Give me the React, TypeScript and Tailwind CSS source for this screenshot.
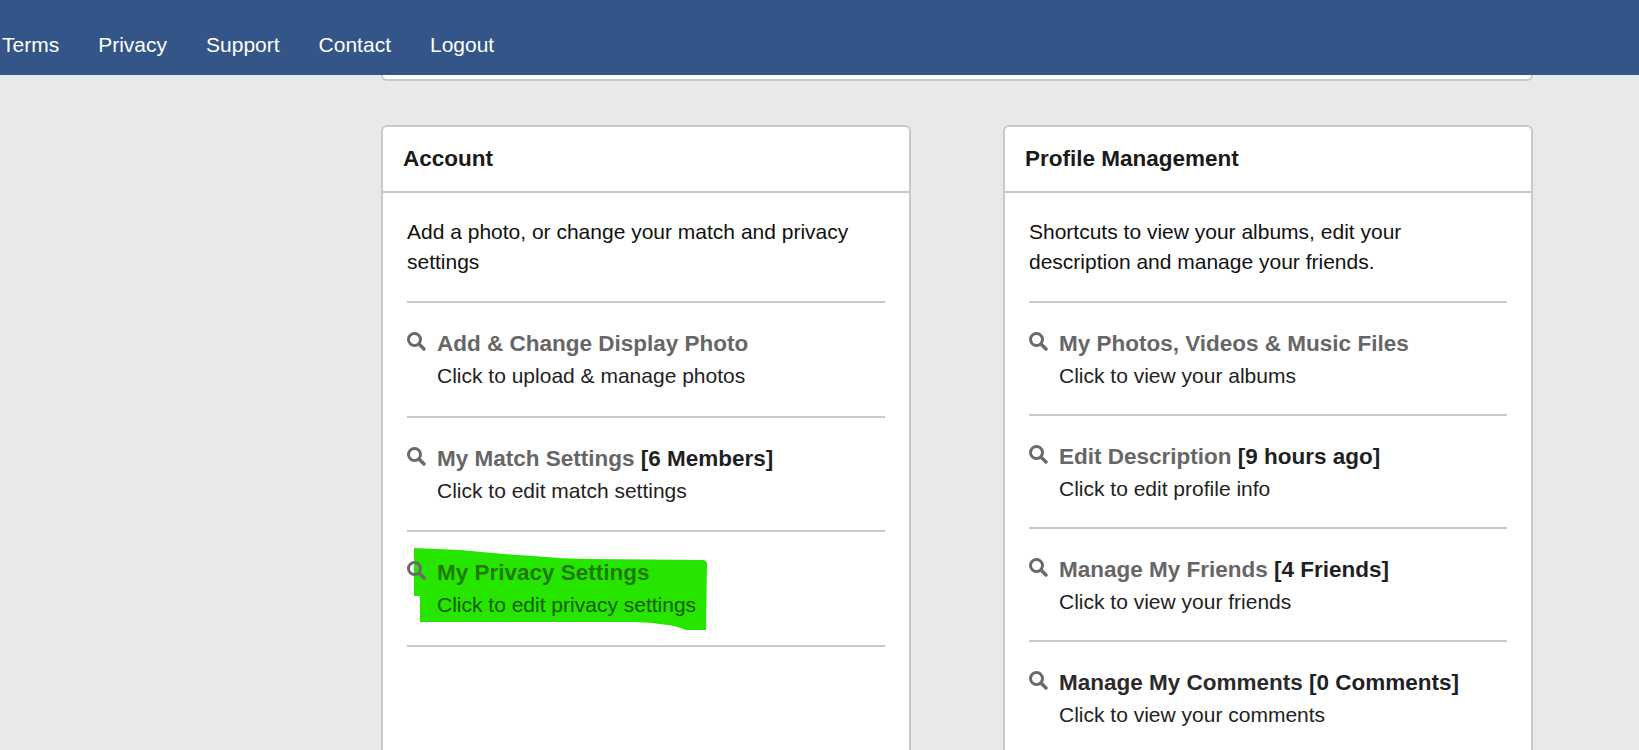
interface Item {
  title: string;
  note?: string;
  sub: string;
  dark?: boolean;
}

const accountItems: Item[] = [
  { title: 'Add & Change Display Photo', sub: 'Click to upload & manage photos' },
  { title: 'My Match Settings', note: '[6 Members]', sub: 'Click to edit match settings' },
  { title: 'My Privacy Settings', sub: 'Click to edit privacy settings' },
];

const profileItems: Item[] = [
  { title: 'My Photos, Videos & Music Files', sub: 'Click to view your albums' },
  { title: 'Edit Description', note: '[9 hours ago]', sub: 'Click to edit profile info' },
  { title: 'Manage My Friends', note: '[4 Friends]', sub: 'Click to view your friends' },
  { title: 'Manage My Comments', note: '[0 Comments]', sub: 'Click to view your comments', dark: true },
];

function SearchIcon() {
  return (
    <svg className="mt-[3px] shrink-0 relative z-10" width="19" height="19" viewBox="0 0 19 19" fill="none" stroke="#6a6a6a">
      <circle cx="7.5" cy="7.5" r="6" strokeWidth="3" />
      <path d="M12.2 12.2 L17 17" strokeWidth="3.4" strokeLinecap="round" />
    </svg>
  );
}

function Highlight() {
  return (
    <svg
      className="absolute left-[7px] top-[16px] pointer-events-none"
      width="300"
      height="88"
      viewBox="0 0 300 88"
    >
      <path
        d="M0 0 L47 2 Q85 6 120 8 Q150 11 177 11 L288 12 Q293 12 293 16 L292 82 L272 82 Q262 78 254 77 Q235 74 217 74 L6 74 L6 48 L0 48 Z"
        fill="#26e600"
      />
    </svg>
  );
}

function Row({ item, compact, marked }: { item: Item; compact: boolean; marked?: boolean }) {
  return (
    <div className={`relative flex border-b-2 border-[#c9c9c9] pt-[26px] ${compact ? 'pb-[23px]' : 'pb-[24.7px]'}`}>
      <SearchIcon />
      <div className="relative z-10 ml-[11px]">
        <div className={`text-[22.5px] leading-[30px] font-bold ${marked ? 'text-[#1f7a0a]' : 'text-[#666666]'}`}>
          <span className={item.dark ? 'text-[#2b2b2b]' : ''}>{item.title}</span>
          {item.note && <span className="text-[#1f1f24]"> {item.note}</span>}
        </div>
        <div className={`mt-[2px] text-[21px] leading-[30px] ${marked ? 'text-[#14590a]' : 'text-[#222222]'}`}>
          {item.sub}
        </div>
      </div>
      {marked && <Highlight />}
    </div>
  );
}

function Card({ title, intro, items, compact }: { title: string; intro: string; items: Item[]; compact: boolean }) {
  return (
    <section className="w-[530px] h-[700px] bg-white border-2 border-[#c9c9c9] rounded-[6px]">
      <h2 className="h-[66px] pl-[20px] flex items-center border-b-2 border-[#c9c9c9] text-[22.5px] font-bold text-[#1a1a1a]">
        {title}
      </h2>
      <div className="px-[24px] pt-[24px]">
        <p className="pb-[24px] border-b-2 border-[#c9c9c9] text-[21px] leading-[30px] text-[#111111]">{intro}</p>
        {items.map((item, i) => (
          <Row key={item.title} item={item} compact={compact} marked={item.title === 'My Privacy Settings' && i === 2} />
        ))}
      </div>
    </section>
  );
}

export default function App() {
  return (
    <div className="h-[750px] overflow-hidden bg-[#e9e9eb] font-['Liberation_Sans',Arial,sans-serif]">
      <header className="h-[75px] bg-[#335587] pl-[2px] pt-[30px] flex gap-[39px] text-[21px] leading-[30px] text-white">
        <a>Terms</a>
        <a>Privacy</a>
        <a>Support</a>
        <a>Contact</a>
        <a>Logout</a>
      </header>
      <div className="pl-[381px]">
        <div className="w-[1152px] h-[6px] bg-white border-2 border-t-0 border-[#c9c9c9] rounded-b-[6px]" />
        <div className="mt-[44px] flex gap-[92px]">
          <Card
            title="Account"
            intro="Add a photo, or change your match and privacy settings"
            items={accountItems}
            compact={false}
          />
          <Card
            title="Profile Management"
            intro="Shortcuts to view your albums, edit your description and manage your friends."
            items={profileItems}
            compact
          />
        </div>
      </div>
    </div>
  );
}
